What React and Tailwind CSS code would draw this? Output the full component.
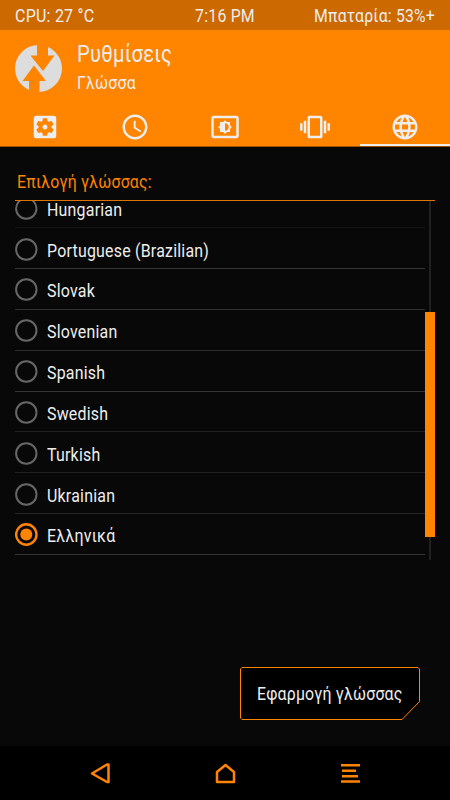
import React from "react";
import {
    MdSettingsApplications,
    MdAccessTime,
    MdSettingsBrightness,
    MdVibration,
    MdLanguage,
} from "react-icons/md";

const languages = [
    { name: "Hungarian", line: "border-[#161616]" },
    { name: "Portuguese (Brazilian)", line: "border-[#333333]" },
    { name: "Slovak", line: "border-[#303030]" },
    { name: "Slovenian", line: "border-[#2c2c2c]" },
    { name: "Spanish", line: "border-[#333333]" },
    { name: "Swedish", line: "border-[#222222]" },
    { name: "Turkish", line: "border-[#222222]" },
    { name: "Ukrainian", line: "border-[#262626]" },
    { name: "Ελληνικά", line: "border-[#333333]", selected: true },
];

const tabs = [
    { id: "general", Icon: MdSettingsApplications },
    { id: "time", Icon: MdAccessTime },
    { id: "screen", Icon: MdSettingsBrightness },
    { id: "vibration", Icon: MdVibration },
    { id: "language", Icon: MdLanguage, active: true },
];

function Radio({ selected }) {
    return (
        <svg className="w-[24px] h-[24px] mt-[3px] shrink-0" viewBox="0 0 24 24" fill="none">
            <circle cx="11.3" cy="11.5" r="10.2" stroke={selected ? "#ff8400" : "#666666"} strokeWidth={selected ? 2.4 : 2} />
            {selected && <circle cx="11.3" cy="11.5" r="6" fill="#ff8400" />}
        </svg>
    );
}

function App() {
    return (
        <div className="w-[450px] h-[800px] bg-[#080808] flex flex-col overflow-hidden font-['Roboto','Noto_Sans',sans-serif] text-[18px] tracking-[.25px] text-[#eeeeee] whitespace-nowrap">
            {/* status bar */}
            <div className="h-[30px] shrink-0 bg-[#cc6900] flex items-center justify-between px-[15px]">
                <span className="w-[120px] origin-left scale-x-[.89]">CPU: 27 °C</span>
                <span className="scale-x-[.88]">7:16 PM</span>
                <span className="w-[120px] flex justify-end origin-right scale-x-[.875]">Μπαταρία: 53%+</span>
            </div>

            {/* header */}
            <header className="h-[117px] shrink-0 bg-[#ff8400] flex flex-col justify-between border-b border-[#a05300]">
                <div className="flex pl-[15px] pt-[10px]">
                    <svg className="w-[47px] h-[47px] mt-[5px]" viewBox="0 0 47 47">
                        <circle cx="23.5" cy="23.5" r="23.5" fill="#dddddd" />
                        <path fill="#ff8400" d="M22 0H33V10.5H39.5L28 26L19 15L15.500 10.500H22Z" />
                        <path fill="#ff8400" d="M19 20.500L31 36H24.500V47H14V36H7.500Z" />
                    </svg>
                    <div className="pl-[15px]">
                        <h1 className="text-[23px] leading-[29px] origin-left scale-x-[.88]">Ρυθμίσεις</h1>
                        <p className="leading-[28px] origin-left scale-x-[.88]">Γλώσσα</p>
                    </div>
                </div>
                <nav className="flex h-[39px]">
                    {tabs.map(({ id, Icon, active }) => (
                        <div key={id} className={`w-[90px] flex justify-center pt-[5px] border-b-2 ${active ? "border-[#eeeeee]" : "border-transparent"}`}>
                            <Icon size={30} />
                        </div>
                    ))}
                </nav>
            </header>

            {/* language list */}
            <main className="grow px-[15px] flex flex-col">
                <div className="h-[54px] pt-[21px] pl-[2px] border-b border-[#dd7300] text-[#ff8400]">
                    <h2 className="origin-left scale-x-[.88]">Επιλογή γλώσσας:</h2>
                </div>
                <div className="h-[359px] flex overflow-hidden">
                    <ul className="w-[410px] -mt-[13.7px]">
                        {languages.map(({ name, line, selected }) => (
                            <li key={name} className={`h-[40.85px] flex items-center border-b ${line}`}>
                                <Radio selected={selected} />
                                <span className="ml-[8px] pt-[4px] origin-left scale-x-[.885]">{name}</span>
                            </li>
                        ))}
                    </ul>
                    <div className="w-[10px] flex flex-col items-center">
                        <div className="w-[2px] h-[111px] bg-[#202020]" />
                        <div className="w-[10px] h-[225px] bg-[#ff8400]" />
                        <div className="w-[2px] grow bg-[#202020]" />
                    </div>
                </div>
                <div className="flex justify-end pt-[106px] pr-[15px]">
                    <button className="relative w-[180px] h-[54px] flex items-center justify-center">
                        <svg className="absolute inset-0 w-[180px] h-[54px]" viewBox="0 0 180 54">
                            <path d="M2 1.500H178L179.500 3V35.500L162 53.500H2L.5 52V3Z" fill="#000000" stroke="#ff8400" />
                        </svg>
                        <span className="relative pt-px scale-x-[.88]">Εφαρμογή γλώσσας</span>
                    </button>
                </div>
            </main>

            {/* navigation bar */}
            <footer className="h-[54px] shrink-0 bg-black flex justify-between px-[87px]">
                <svg className="w-[26px] h-[54px]" viewBox="0 0 26 54" fill="none" stroke="#ff8400" strokeWidth="2.500" strokeLinejoin="round">
                    <path d="M5 27.500L20 18.500H21.500V36H20Z" />
                </svg>
                <svg className="w-[26px] h-[54px]" viewBox="0 0 26 54" fill="none" stroke="#ff8400" strokeWidth="2.500" strokeLinejoin="round">
                    <path d="M13.500 19L22 26V36H5V26Z" />
                </svg>
                <svg className="w-[26px] h-[54px]" viewBox="0 0 26 54" fill="none" stroke="#ff8400" strokeWidth="2.500">
                    <path d="M4 19.300H23M5 24.700H19M5 30.200H21M4 35.500H23" />
                </svg>
            </footer>
        </div>
    );
}

export default App;
